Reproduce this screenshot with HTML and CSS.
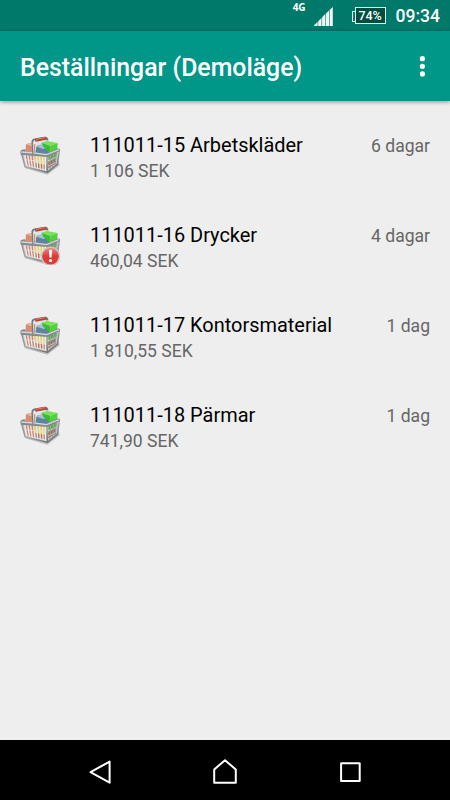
FILE: index.html
```html
<!DOCTYPE html>
<html lang="sv">
<head>
    <meta charset="UTF-8">
    <meta name="viewport" content="width=device-width, initial-scale=1.0">
    <title>Beställningar</title>
    <link rel="stylesheet" href="styles.css">
</head>
<body>
    <!-- shared basket icon -->
    <svg class="defs" width="0" height="0">
        <defs>
            <linearGradient id="metal" x1="0" y1="0" x2="1" y2="1">
                <stop offset="0" stop-color="#85898c"/>
                <stop offset="0.5" stop-color="#a5a8aa"/>
                <stop offset="1" stop-color="#5c6062"/>
            </linearGradient>
            <linearGradient id="alert" x1="0" y1="0" x2="0" y2="1">
                <stop offset="0" stop-color="#ef8c86"/>
                <stop offset="0.5" stop-color="#de3a38"/>
                <stop offset="1" stop-color="#e03c35"/>
            </linearGradient>
            <symbol id="basket" viewBox="30 30 120 120">
                <path d="M44 129L112 149L149 121L146 108Z" fill="#8d9091" opacity="0.5"/>
                <path d="M37 85L111 89L147 74L141 117L112 141L45 125Z" fill="#c4c5c1"/>
                <!-- goods -->
                <path d="M73 47L102 42L112 48L105 62L76 60Z" fill="#dce4e9"/>
                <path d="M48 58L60 54L76 58V84H46Z" fill="#d98d70"/>
                <path d="M48 58L60 54L74 58L64 64Z" fill="#edb79d"/>
                <path d="M79 66Q82 58 98 60L119 66V88H76Z" fill="#5f83a2"/>
                <path d="M80 65Q85 58 98 60L114 65L101 72Z" fill="#a5c2d6"/>
                <path d="M94 53L112 48L143 54L121 62Z" fill="#7be05a"/>
                <path d="M94 53L121 62L119 83L99 64Z" fill="#3cbf2f"/>
                <path d="M121 62L143 54L142 73L119 83Z" fill="#4fd33b"/>
                <path d="M116 91L142 80L138 99L115 110Z" fill="#58ad4c"/>
                <path d="M115 110L138 99L136 116L115 130Z" fill="#9a6d60"/>
                <path d="M46 92H74L76 128L51 121Z" fill="#c98877"/>
                <path d="M75 92L107 94L109 120L76 114Z" fill="#e3cf62"/>
                <path d="M76 114L109 120L109 134L77 128Z" fill="#b7695a"/>
                <!-- wire sides -->
                <path d="M44 90L51 124M53 91L59 126M62 92L67 129M71 92L75 131M80 92L83 133M89 93L91 135M98 93L99 137M106 93L106 138" stroke="#efefee" stroke-width="4" fill="none"/>
                <path d="M41 104L111 111M45 122L112 136M113 108L143 95M113 124L141 110" stroke="#e0e1e1" stroke-width="2.5" fill="none"/>
                <path d="M122 87L120 134M131 83L128 128M139 79L136 121" stroke="#9ea3a1" stroke-width="3" fill="none"/>
                <path d="M35 86L45 125L112 142L142 118L148 76M111 92L112 141" stroke="url(#metal)" stroke-width="4.5" fill="none" stroke-linejoin="round"/>
                <!-- rim -->
                <path d="M31 81Q31 73 45 73L48 79L72 82L108 86L141 71Q151 68 150 77L113 96L32 89Z" fill="#85898d"/>
                <path d="M34 81L72 84L110 89L147 74" stroke="#d3d6d8" stroke-width="4" fill="none"/>
                <!-- handle -->
                <path d="M71 91L68 53Q67 46 74 44L104 39Q111 38 112 46" stroke="#74777a" stroke-width="7" fill="none" stroke-linejoin="round"/>
                <path d="M72 89L70 54Q69 48 75 46" stroke="#d8dbdc" stroke-width="3" fill="none"/>
                <path d="M76 46L108 40" stroke="#b94436" stroke-width="9"/>
                <path d="M78 43L105 38" stroke="#df8b7c" stroke-width="2.5"/>
            </symbol>
        </defs>
    </svg>

    <div class="screen">
        <div class="status-bar">
            <span class="network">4G</span>
            <svg class="signal" width="19" height="19" viewBox="0 0 19 19">
                <path d="M0 19V18.4L3.6 14.8V19ZM4.2 19V14.2L7.5 10.9V19ZM8.1 19V10.3L11.3 7.1V19ZM11.9 19V6.5L15.1 3.4V19ZM15.7 19V2.8L18.8 0V19Z" fill="#f1f6f5"/>
            </svg>
            <div class="battery"><span>74%</span></div>
            <span class="clock">09:34</span>
        </div>

        <header class="app-bar">
            <h1>Beställningar (Demoläge)</h1>
            <svg width="6" height="22" viewBox="0 0 6 22">
                <g fill="#fff">
                    <circle cx="3.4" cy="3.7" r="2.6"/>
                    <circle cx="3.4" cy="11.3" r="2.6"/>
                    <circle cx="3.4" cy="18.9" r="2.6"/>
                </g>
            </svg>
        </header>

        <main class="orders">
            <div class="order">
                <svg class="icon" viewBox="0 0 40 40"><use href="#basket" width="40" height="40"/></svg>
                <div class="info">
                    <h2>111011-15 Arbetskläder</h2>
                    <p>1 106 SEK</p>
                </div>
                <span class="age">6 dagar</span>
            </div>
            <div class="order">
                <svg class="icon" viewBox="0 0 40 40">
                    <use href="#basket" width="40" height="40"/>
                    <circle cx="30.5" cy="31.3" r="9" fill="url(#alert)" stroke="#d2c6c4" stroke-width="1.4"/>
                    <path d="M28.9 24.8H32.1L31.5 32.6H29.5Z" fill="#fff"/>
                    <circle cx="30.5" cy="35.5" r="1.6" fill="#fff"/>
                </svg>
                <div class="info">
                    <h2>111011-16 Drycker</h2>
                    <p>460,04 SEK</p>
                </div>
                <span class="age">4 dagar</span>
            </div>
            <div class="order">
                <svg class="icon" viewBox="0 0 40 40"><use href="#basket" width="40" height="40"/></svg>
                <div class="info">
                    <h2>111011-17 Kontorsmaterial</h2>
                    <p>1 810,55 SEK</p>
                </div>
                <span class="age">1 dag</span>
            </div>
            <div class="order">
                <svg class="icon" viewBox="0 0 40 40"><use href="#basket" width="40" height="40"/></svg>
                <div class="info">
                    <h2>111011-18 Pärmar</h2>
                    <p>741,90 SEK</p>
                </div>
                <span class="age">1 dag</span>
            </div>
        </main>

        <nav class="nav-bar">
            <svg viewBox="0 0 40 60"><path d="M29.6 21.6V42.7L10.5 32.2Z"/></svg>
            <svg viewBox="0 0 40 60"><path d="M9.2 29.4L20 20.2L30.8 29.4V42.8H9.2Z"/></svg>
            <svg viewBox="0 0 40 60"><path d="M11.1 23.2H29.7V41H11.1Z"/></svg>
        </nav>
    </div>
</body>
</html>
```
FILE: styles.css
```css
* {
    box-sizing: border-box;
}

body {
    margin: 0;
    font-family: Roboto, "Liberation Sans", sans-serif;
    background: #eeeeee;
}

h1, h2, p {
    margin: 0;
}

svg {
    display: block;
    flex: none;
}

.defs {
    position: absolute;
}

.screen {
    display: flex;
    flex-direction: column;
    width: 450px;
    height: 800px;
}

/* status bar */
.status-bar {
    display: flex;
    align-items: flex-start;
    justify-content: flex-end;
    height: 31px;
    padding-right: 10px;
    background: #00796b;
    color: #fff;
}

.network {
    margin: 1px 8px 0 0;
    font-family: "Open Sans", sans-serif;
    font-size: 10px;
    line-height: 12px;
    font-weight: 700;
}

.signal {
    margin: 7px 19px 0 0;
}

.battery {
    display: flex;
    align-items: center;
    justify-content: center;
    width: 31px;
    height: 17px;
    margin: 7px 10px 0 3px;
    border: 1px solid #e0eeec;
    background: #004d40;
    font-size: 12.5px;
    line-height: 14px;
    font-weight: 500;
    position: relative;
}

/* battery terminal */
.battery::before {
    content: "";
    position: absolute;
    left: -4px;
    top: 3px;
    width: 3px;
    height: 9px;
    border: 1px solid #e0eeec;
    border-right: none;
}

.clock {
    margin-top: 6px;
    font-size: 17.5px;
    line-height: 21px;
    font-weight: 500;
}

/* app bar */
.app-bar {
    display: flex;
    align-items: center;
    justify-content: space-between;
    height: 70px;
    padding: 0 25px 0 20px;
    background: #009688;
    color: #fff;
    box-shadow: 0 1px 4px rgba(0, 0, 0, 0.4);
}

.app-bar h1 {
    margin-top: 3px;
    font-size: 24.85px;
    line-height: 30px;
    font-weight: 500;
}

/* order list */
.orders {
    flex: 1;
    padding-top: 9px;
}

.order {
    display: flex;
    align-items: flex-start;
    height: 90px;
    padding: 22px 20px 0;
}

.icon {
    width: 40px;
    height: 40px;
    margin: 3px 30px 0 0;
}

.info {
    flex: 1;
}

.info h2 {
    font-size: 19.95px;
    line-height: 26px;
    font-weight: 400;
    color: #000;
}

.info p {
    margin-top: 1px;
    font-size: 17.55px;
    line-height: 24px;
    color: #666;
}

.age {
    margin-top: 2px;
    font-size: 17.55px;
    line-height: 24px;
    color: #666;
}

/* navigation bar */
.nav-bar {
    display: flex;
    justify-content: space-between;
    height: 60px;
    padding: 0 80px;
    background: #000;
}

.nav-bar svg {
    width: 40px;
    height: 60px;
}

.nav-bar path {
    fill: none;
    stroke: #fff;
    stroke-width: 2;
    stroke-linejoin: round;
}
```
